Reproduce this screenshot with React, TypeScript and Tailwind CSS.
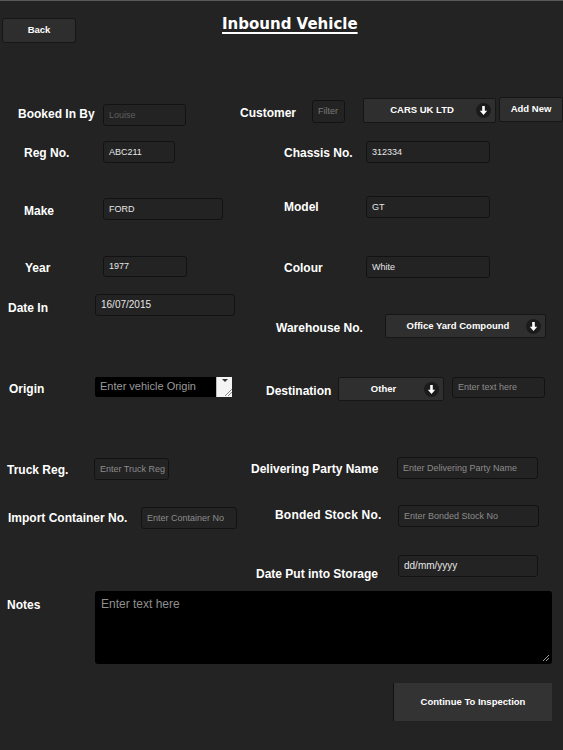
import React from "react";

type P = { children?: React.ReactNode; className?: string };

function Label({ children, className = "" }: P) {
  return (
    <div className={`shrink-0 whitespace-nowrap text-[12px] font-bold leading-[14px] text-white ${className}`}>
      {children}
    </div>
  );
}

function Field({ children, className = "" }: P) {
  return (
    <div
      className={`shrink-0 flex items-center overflow-hidden whitespace-nowrap rounded-[3px] border border-[#121212] bg-[#232323] px-[5px] text-[9px] leading-none ${className}`}
    >
      {children}
    </div>
  );
}

function Arrow() {
  return (
    <svg width="15" height="15" viewBox="0 0 15 15" className="shrink-0">
      <circle cx="7.5" cy="7.5" r="7.5" fill="#1b1b1b" />
      <path d="M6.2 3h2.6v4.7h2.4L7.5 11.9 3.8 7.7h2.4z" fill="#fff" />
    </svg>
  );
}

function Dropdown({ children, className = "" }: P) {
  return (
    <div
      className={`shrink-0 flex items-center rounded-[2px] border border-[#161616] bg-[#2f2f2f] pl-[4px] pr-[4px] text-[9.5px] font-bold text-white ${className}`}
    >
      <span className="flex-1 text-center">{children}</span>
      <Arrow />
    </div>
  );
}

export default function App() {
  return (
    <div className="w-[563px] h-[750px] overflow-hidden bg-[#232323] font-['Liberation_Sans',Arial,sans-serif] shadow-[inset_0_1px_0_#5a5a5a]">
      {/* header */}
      <div className="flex items-start h-[97px]">
        <div className="shrink-0 ml-[2px] mt-[18px] flex h-[25px] w-[74px] items-center justify-center rounded-[3px] border border-[#161616] bg-[#2e2e2e] text-[9.5px] font-bold text-white">
          Back
        </div>
        <div className="shrink-0 ml-[146px] mt-[15px] font-['DejaVu_Sans',Verdana,sans-serif] text-[15px] font-bold leading-[18px] text-white underline decoration-[1.5px] underline-offset-[3px]">
          Inbound Vehicle
        </div>
      </div>

      {/* booked in / customer */}
      <div className="flex items-start h-[44px]">
        <Label className="ml-[18px] w-[85px] mt-[10px]">Booked In By</Label>
        <Field className="w-[83px] h-[22px] mt-[7px] text-[#5f5f5f]">Louise</Field>
        <Label className="ml-[54px] w-[72px] mt-[9px]">Customer</Label>
        <Field className="w-[33px] h-[23px] mt-[3px] px-[3px] text-[#7a7a7a]">Filter</Field>
        <Dropdown className="ml-[18px] w-[133px] h-[25px] mt-[1px]">CARS UK LTD</Dropdown>
        <div className="shrink-0 ml-[3px] flex h-[25px] w-[64px] items-center justify-center rounded-[2px] border border-[#161616] bg-[#2f2f2f] text-[9.5px] font-bold text-white">
          Add New
        </div>
      </div>

      {/* reg / chassis */}
      <div className="flex items-start h-[55px]">
        <Label className="ml-[24px] w-[79px] mt-[5px]">Reg No.</Label>
        <Field className="w-[72px] h-[22px] text-[#e6e6e6]">ABC211</Field>
        <Label className="ml-[109px] w-[82px] mt-[5px]">Chassis No.</Label>
        <Field className="w-[124px] h-[22px] text-[#e6e6e6]">312334</Field>
      </div>

      {/* make / model */}
      <div className="flex items-start h-[60px]">
        <Label className="ml-[24px] w-[79px] mt-[8px]">Make</Label>
        <Field className="w-[120px] h-[22px] mt-[2px] text-[#e6e6e6]">FORD</Field>
        <Label className="ml-[61px] w-[82px] mt-[4px]">Model</Label>
        <Field className="w-[124px] h-[22px] text-[#e6e6e6]">GT</Field>
      </div>

      {/* year / colour */}
      <div className="flex items-start h-[38px]">
        <Label className="ml-[25px] w-[78px] mt-[5px]">Year</Label>
        <Field className="w-[84px] h-[21px] text-[#e6e6e6]">1977</Field>
        <Label className="ml-[97px] w-[82px] mt-[5px]">Colour</Label>
        <Field className="w-[124px] h-[22px] text-[#e6e6e6]">White</Field>
      </div>

      {/* date in / warehouse */}
      <div className="flex items-start h-[83px]">
        <Label className="ml-[8px] w-[87px] mt-[7px]">Date In</Label>
        <Field className="w-[140px] h-[22px] text-[10px] text-[#e6e6e6]">16/07/2015</Field>
        <Label className="ml-[41px] w-[109px] mt-[27px]">Warehouse No.</Label>
        <Dropdown className="w-[161px] h-[24px] mt-[20px]">Office Yard Compound</Dropdown>
      </div>

      {/* origin / destination */}
      <div className="flex items-start h-[80px]">
        <Label className="ml-[9px] w-[86px] mt-[5px]">Origin</Label>
        <div className="shrink-0 flex h-[20px] w-[137px] rounded-[2px] bg-black">
          <span className="flex-1 pl-[5px] pt-[3px] text-[11px] leading-[13px] text-[#9a9a9a]">Enter vehicle Origin</span>
          <div className="relative h-[20px] w-[16px] bg-[#f4f4f4] border-l border-[#bbbbbb]">
            <svg width="16" height="20" viewBox="0 0 16 20" className="absolute left-0 top-0">
              <path d="M5 2h6L8 5z" fill="#333" />
              <path d="M8 19L15 12M11 19L15 15" stroke="#888" strokeWidth="1" />
            </svg>
          </div>
        </div>
        <Label className="ml-[34px] w-[72px] mt-[7px]">Destination</Label>
        <Dropdown className="w-[106px] h-[24px]">Other</Dropdown>
        <Field className="ml-[8px] w-[93px] h-[21px] text-[#8c8c8c]">Enter text here</Field>
      </div>

      {/* truck / delivering */}
      <div className="flex items-start h-[48px]">
        <Label className="ml-[7px] w-[87px] mt-[6px]">Truck Reg.</Label>
        <Field className="w-[75px] h-[22px] mt-[1px] text-[#8c8c8c]">Enter Truck Reg</Field>
        <Label className="ml-[82px] w-[146px] mt-[5px]">Delivering Party Name</Label>
        <Field className="w-[141px] h-[22px] text-[#8c8c8c]">Enter Delivering Party Name</Field>
      </div>

      {/* container / bonded */}
      <div className="flex items-start h-[50px]">
        <Label className="ml-[8px] w-[133px] mt-[6px]">Import Container No.</Label>
        <Field className="w-[96px] h-[22px] mt-[2px] text-[#8c8c8c]">Enter Container No</Field>
        <Label className="ml-[38px] w-[123px] mt-[3px] text-right pr-[17px] tracking-[0.2px]">Bonded Stock No.</Label>
        <Field className="w-[141px] h-[22px] text-[#8c8c8c]">Enter Bonded Stock No</Field>
      </div>

      {/* storage date */}
      <div className="flex items-start h-[36px]">
        <Label className="ml-[256px] w-[142px] mt-[12px]">Date Put into Storage</Label>
        <Field className="w-[140px] h-[22px] text-[10px] text-[#e6e6e6]">dd/mm/yyyy</Field>
      </div>

      {/* notes */}
      <div className="flex items-start h-[92px]">
        <Label className="ml-[7px] w-[88px] mt-[7px]">Notes</Label>
        <div className="relative shrink-0 h-[73px] w-[457px] rounded-[3px] bg-black px-[6px] pt-[6px] text-[12px] leading-[14px] text-[#8f8f8f]">
          Enter text here
          <svg width="8" height="8" viewBox="0 0 8 8" className="absolute bottom-[2px] right-[2px]">
            <path d="M1 7L7 1M4 7L7 4" stroke="#9a9a9a" strokeWidth="1" />
          </svg>
        </div>
      </div>

      {/* continue */}
      <div className="flex items-start h-[67px]">
        <div className="shrink-0 ml-[393px] flex h-[38px] w-[159px] items-center justify-center border-l border-[#111] bg-[#333333] text-[9.5px] font-bold text-white">
          Continue To Inspection
        </div>
      </div>
    </div>
  );
}
